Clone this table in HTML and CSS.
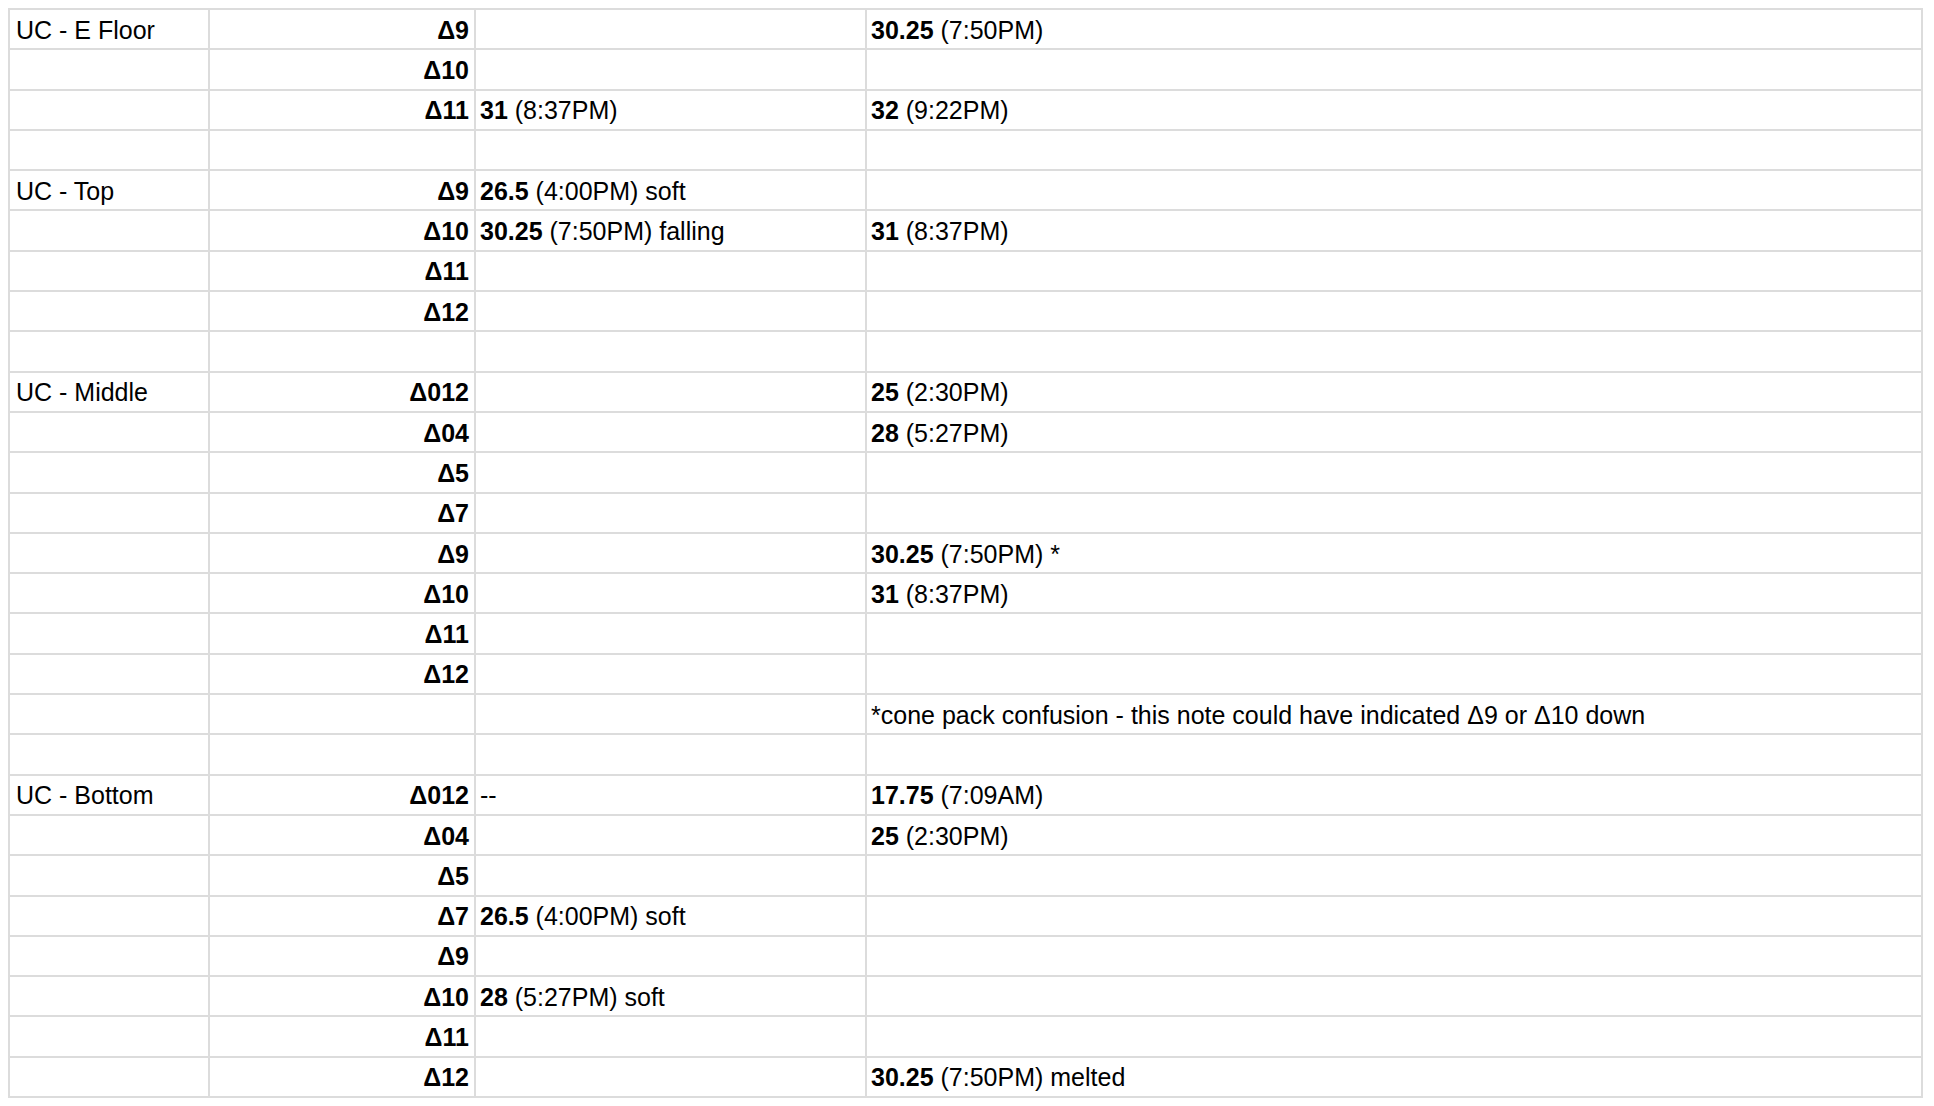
FILE: index.html
```html
<!DOCTYPE html>
<html>
<head>
<meta charset="utf-8">
<link rel="stylesheet" href="styles.css">
</head>
<body>
<div class="sheet">
  <div class="c a">UC - E Floor</div><div class="c b">Δ9</div><div class="c"></div><div class="c"><b>30.25</b>&nbsp;(7:50PM)</div>
  <div class="c a"></div><div class="c b">Δ10</div><div class="c"></div><div class="c"></div>
  <div class="c a"></div><div class="c b">Δ11</div><div class="c"><b>31</b>&nbsp;(8:37PM)</div><div class="c"><b>32</b>&nbsp;(9:22PM)</div>
  <div class="c a"></div><div class="c b"></div><div class="c"></div><div class="c"></div>
  <div class="c a">UC - Top</div><div class="c b">Δ9</div><div class="c"><b>26.5</b>&nbsp;(4:00PM) soft</div><div class="c"></div>
  <div class="c a"></div><div class="c b">Δ10</div><div class="c"><b>30.25</b>&nbsp;(7:50PM) falling</div><div class="c"><b>31</b>&nbsp;(8:37PM)</div>
  <div class="c a"></div><div class="c b">Δ11</div><div class="c"></div><div class="c"></div>
  <div class="c a"></div><div class="c b">Δ12</div><div class="c"></div><div class="c"></div>
  <div class="c a"></div><div class="c b"></div><div class="c"></div><div class="c"></div>
  <div class="c a">UC - Middle</div><div class="c b">Δ012</div><div class="c"></div><div class="c"><b>25</b>&nbsp;(2:30PM)</div>
  <div class="c a"></div><div class="c b">Δ04</div><div class="c"></div><div class="c"><b>28</b>&nbsp;(5:27PM)</div>
  <div class="c a"></div><div class="c b">Δ5</div><div class="c"></div><div class="c"></div>
  <div class="c a"></div><div class="c b">Δ7</div><div class="c"></div><div class="c"></div>
  <div class="c a"></div><div class="c b">Δ9</div><div class="c"></div><div class="c"><b>30.25</b>&nbsp;(7:50PM) *</div>
  <div class="c a"></div><div class="c b">Δ10</div><div class="c"></div><div class="c"><b>31</b>&nbsp;(8:37PM)</div>
  <div class="c a"></div><div class="c b">Δ11</div><div class="c"></div><div class="c"></div>
  <div class="c a"></div><div class="c b">Δ12</div><div class="c"></div><div class="c"></div>
  <div class="c a"></div><div class="c b"></div><div class="c"></div><div class="c">*cone pack confusion - this note could have indicated Δ9 or Δ10 down</div>
  <div class="c a"></div><div class="c b"></div><div class="c"></div><div class="c"></div>
  <div class="c a">UC - Bottom</div><div class="c b">Δ012</div><div class="c">--</div><div class="c"><b>17.75</b>&nbsp;(7:09AM)</div>
  <div class="c a"></div><div class="c b">Δ04</div><div class="c"></div><div class="c"><b>25</b>&nbsp;(2:30PM)</div>
  <div class="c a"></div><div class="c b">Δ5</div><div class="c"></div><div class="c"></div>
  <div class="c a"></div><div class="c b">Δ7</div><div class="c"><b>26.5</b>&nbsp;(4:00PM) soft</div><div class="c"></div>
  <div class="c a"></div><div class="c b">Δ9</div><div class="c"></div><div class="c"></div>
  <div class="c a"></div><div class="c b">Δ10</div><div class="c"><b>28</b>&nbsp;(5:27PM) soft</div><div class="c"></div>
  <div class="c a"></div><div class="c b">Δ11</div><div class="c"></div><div class="c"></div>
  <div class="c a"></div><div class="c b">Δ12</div><div class="c"></div><div class="c"><b>30.25</b>&nbsp;(7:50PM) melted</div>
</div>
</body>
</html>
```
FILE: styles.css
```css
html, body {
  background: #ffffff;
}
body {
  margin: 8px;
  font-family: "Liberation Sans", Arial, sans-serif;
  font-size: 25px;
  color: #000000;
}
.sheet {
  display: grid;
  grid-template-columns: 200px 266px 391px 1056px;
  grid-auto-rows: 40.3px;
  width: max-content;
  border-left: 2px solid #dcdcdc;
  border-top: 2px solid #dcdcdc;
}
.c {
  box-sizing: border-box;
  border-right: 2px solid #dcdcdc;
  border-bottom: 2px solid #dcdcdc;
  display: flex;
  align-items: center;
  padding: 2px 4px 0;
  white-space: nowrap;
  overflow: hidden;
}
.c b {
  font-weight: bold;
}
.a {
  padding-left: 6px;
}
.b {
  justify-content: flex-end;
  font-weight: bold;
  padding-right: 5px;
}
```
